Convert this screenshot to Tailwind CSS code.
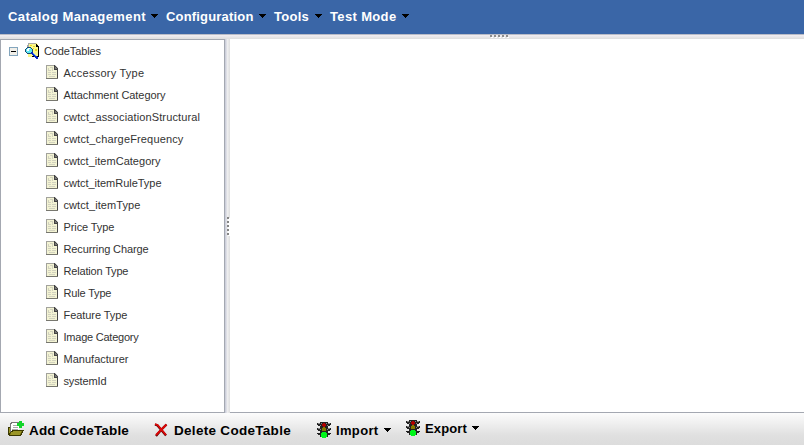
<!DOCTYPE html>
<html lang="en"><head><meta charset="utf-8"><title>Code Tables</title>
<script src="https://cdn.jsdelivr.net/npm/@tailwindcss/browser@4"></script></head>
<body class="w-[804px] h-[445px] overflow-hidden bg-white font-['Liberation_Sans',Arial,sans-serif] text-[#333]">
<svg class="hidden">
 <symbol id="caret" viewBox="0 0 7 4"><path d="M0 0h7v1h-1v1h-1v1h-1v1h-1v-1h-1v-1h-1v-1h-1z" fill="#000"/></symbol>
 <symbol id="doc" viewBox="0 0 12 14"><path d="M0 0h9l3 3v11H0z" fill="#a3a39c"/><path d="M1 1h7v4h3v8H1z" fill="#f3f3d3"/><path d="M8 0h1v1h1v1h1v1h1v11h-1V5H8z" fill="#444"/><path d="M9 2h1v1h1v1H9z" fill="#777"/><path d="M0 13h12v1H0z" fill="#77776f"/><path d="M2 3h1v3H2zM3 5h2v1H3zM4 2h3v1H4zM6 3h1v3H6zM2 7h3v1H2zM6 7h4v1H6zM2 9h3v1H2zM6 9h4v1H6zM3 11h6v1H3z" fill="#d2d2bf"/></symbol>
 <symbol id="light" viewBox="0 0 14 16"><path d="M3 0h8v1h3v2h-1v1h-2v2h3v2h-1v1h-2v2h3v1h-1v1h-2v2H3v-2H1v-1H0v-1h3V9H1V8H0V6h3V4H1V3H0V1h3z" fill="#222"/><path d="M1 1h2v1H1zm10 0h2v1h-2zM1 6h2v1H1zm10 0h2v1h-2zM4 1h1v1H4zm5 0h1v1H9zM3 3h1v1H3zm7 0h1v1h-1zM3 7h1v1H3zm7 0h1v1h-1z" fill="#8a8a8a"/><path d="M5 2h1V1h2v1h1v2H8v1H6V4H5z" fill="#b00000"/><path d="M6 5h2v1h1v3H5V6h1z" fill="#857b00"/><path d="M5 10h4v1h1v4H9v1H5v-1H4v-4h1z" fill="#00f51a"/></symbol>
</svg>
<div class="flex flex-col w-full h-full">
 <nav class="h-[34px] shrink-0 bg-[#3a66a7] text-white font-bold text-[13px] leading-[15px] flex pl-2 pt-[9px]">
  <div class="w-[158px] flex"><span data-w="138" data-font="bold 13px" class="w-[143px] whitespace-nowrap">Catalog Management</span><svg class="w-[7px] h-1 mt-[5px]"><use href="#caret"/></svg></div>
  <div class="w-[108px] flex"><span data-w="87.5" data-font="bold 13px" class="w-[93px] whitespace-nowrap">Configuration</span><svg class="w-[7px] h-1 mt-[5px]"><use href="#caret"/></svg></div>
  <div class="w-[56px] flex"><span data-w="35" data-font="bold 13px" class="w-[41px] whitespace-nowrap">Tools</span><svg class="w-[7px] h-1 mt-[5px]"><use href="#caret"/></svg></div>
  <div class="flex"><span data-w="66.5" data-font="bold 13px" class="w-[72px] whitespace-nowrap">Test Mode</span><svg class="w-[7px] h-1 mt-[5px]"><use href="#caret"/></svg></div>
 </nav>
 <div class="h-[5px] shrink-0 bg-linear-to-b from-[#f2eef2] to-[#dedede] border-t border-[#b9bcc7] pl-[490px]">
  <svg width="19" height="3" class="block" fill="#8d8d8d"><path d="M0 0h2v2H0zM4 0h2v2H4zM8 0h2v2H8zM12 0h2v2h-2zM16 0h2v2h-2z"/><path d="M1 2h2v1H1zM5 2h2v1H5zM9 2h2v1H9zM13 2h2v1h-2zM17 2h2v1h-2z" fill="#fff"/></svg>
 </div>
 <main class="h-[374px] shrink-0 flex">
  <aside class="w-[225px] h-[374px] border border-[#a4a8b1] text-[11px] leading-[22px]">
   <div class="flex h-[22px] pl-2">
    <svg class="w-[9px] h-[9px] mt-[7px]" viewBox="0 0 9 9"><path d="M0 0h9v9H0z" fill="#83a5bd"/><path d="M1 1h7v7H1z" fill="#f1efe9"/><path d="M2 4h5v1H2z" fill="#000"/></svg>
    <svg class="w-[15px] h-[16px] ml-[7px] mt-[3px]" viewBox="0 0 15 16"><path d="M3 0h9v1h1v2h1v11H3z" fill="#fbf68c"/><path d="M3 0h8v1H4v3H2V2h1z" fill="#a8a8a8"/><path d="M11 1h1v1h1v1h1v11H7v-1h6V4h-2z" fill="#000"/><path d="M5 2h2v1H5zm3 1h2v1H8zm2 3h2v2h-2zM8 5h1v1H8z" fill="#e7d91d"/><path d="M2 4h4v1h1v1h1v3H7v1H6v1H2v-1H1V9H0V6h1V5h1z" fill="#164b73"/><path d="M2 5h4v1h1v3H6v1H2V9H1V6h1z" fill="#5ee7f5"/><path d="M3 5h2v1H4v2H2V6h1z" fill="#fff"/><path d="M6 9h2v1h1v1h1v1h1v1h1v1h1v2h-2v-1h-1v-1H9v-1H8v-1H7v-1H6z" fill="#0829c5"/><path d="M8 10h1v1h1v1h1v1h-1v-1H9v-1H8z" fill="#55a2f8"/></svg>
    <span data-w="57" data-font="11px" class="ml-1 whitespace-nowrap">CodeTables</span>
   </div>
   <ul id="tree"></ul>
  </aside>
  <div class="w-[5px] h-full bg-linear-to-r from-[#c5c8d6] via-[#eeeeef] to-[#dedede] pt-[178px] pl-[2px]">
   <svg width="3" height="19" class="block" fill="#858585"><path d="M1 1h2v18H1z" fill="#fff"/><path d="M0 0h2v2H0zM0 4h2v2H0zM0 8h2v2H0zM0 12h2v2H0zM0 16h2v2H0z"/></svg>
  </div>
  <section class="flex-1 bg-white border-b border-[#a4a8b1]"></section>
 </main>
 <footer class="h-[32px] shrink-0 bg-linear-to-b from-[#fcfcfc] via-[#e0e0e0] via-70% to-[#dcdcdc] text-black font-bold flex">
  <div class="flex pl-2 pt-[8px] w-[154px]">
   <svg class="w-[16px] h-[16px]" viewBox="0 0 16 16"><path d="M3 1h8v11H2V2h1z" fill="#777"/><path d="M4 2h7v9H3V3h1z" fill="#fff"/><path d="M5 4h4v1H5zM5 6h5v1H5zM4 8h6v1H4z" fill="#aaa"/><path d="M0 6h2v8H0zM4 9h12v1h-1v2h-1v2h-1v1H1v-1l1-3h1v-1h1z" fill="#3b3900"/><path d="M1 7h1v5H1zM5 10h9l-2 4H2l1-3h2z" fill="#9a9526"/><path d="M11 0h3v2h2v3h-2v2h-3V5H9V2h2z" fill="#12d52a"/></svg>
   <span data-w="100" data-font="bold 13.5px" class="ml-[5px] mt-[2px] text-[13.5px] leading-[16px] whitespace-nowrap">Add CodeTable</span>
  </div>
  <div class="flex pt-[8px] w-[163px]">
   <svg class="w-[14px] h-[14px] mt-[2px]" viewBox="0 0 14 14"><path d="M1 1.5L3.5 2.5L12 12.5M12.5 1.5L7 7L2 13" fill="none" stroke="#5a0000" stroke-width="2.3"/><path d="M1 1L3.5 2L12 12M12.5 1.5L7 7L2 12" fill="none" stroke="#dd0808" stroke-width="1.8"/></svg>
   <span data-w="117" data-font="bold 13.5px" class="ml-[6px] mt-[2px] text-[13.5px] leading-[16px] whitespace-nowrap">Delete CodeTable</span>
  </div>
  <div class="flex w-[89px] pt-[9px]">
   <svg class="w-[14px] h-[16px]"><use href="#light"/></svg>
   <span data-w="42.5" data-font="bold 13px" class="ml-[5px] mt-px w-[48px] text-[13px] leading-[16px] whitespace-nowrap">Import</span><svg class="w-[7px] h-1 mt-[6px]"><use href="#caret"/></svg>
  </div>
  <div class="flex pt-[7px]">
   <svg class="w-[14px] h-[16px]"><use href="#light"/></svg>
   <span data-w="42" data-font="bold 13px" class="ml-[5px] mt-px w-[47px] text-[13px] leading-[16px] whitespace-nowrap">Export</span><svg class="w-[7px] h-1 mt-[6px]"><use href="#caret"/></svg>
  </div>
 </footer>
</div>
<script>
const items = [['Accessory Type',81],['Attachment Category',102],['cwtct_associationStructural',136.5],['cwtct_chargeFrequency',120],['cwtct_itemCategory',97],['cwtct_itemRuleType',98],['cwtct_itemType',77],['Price Type',51],['Recurring Charge',85],['Relation Type',65],['Rule Type',48],['Feature Type',64],['Image Category',75],['Manufacturer',65],['systemId',43]];
document.getElementById('tree').innerHTML = items.map(([name, w]) => `<li class="flex h-[22px] pl-[45px]"><svg class="w-[12px] h-[14px] mt-[3px]"><use href="#doc"/></svg><span data-w="${w}" data-font="11px" class="ml-[5.5px] whitespace-nowrap">${name}</span></li>`).join('');
const ctx = document.createElement('canvas').getContext('2d');
for (const el of document.querySelectorAll('[data-w]')) {
  ctx.font = `${el.dataset.font} "Liberation Sans"`;
  const text = el.textContent;
  el.style.letterSpacing = (el.dataset.w - ctx.measureText(text).width) / text.length + 'px';
}
</script>
</body></html>
